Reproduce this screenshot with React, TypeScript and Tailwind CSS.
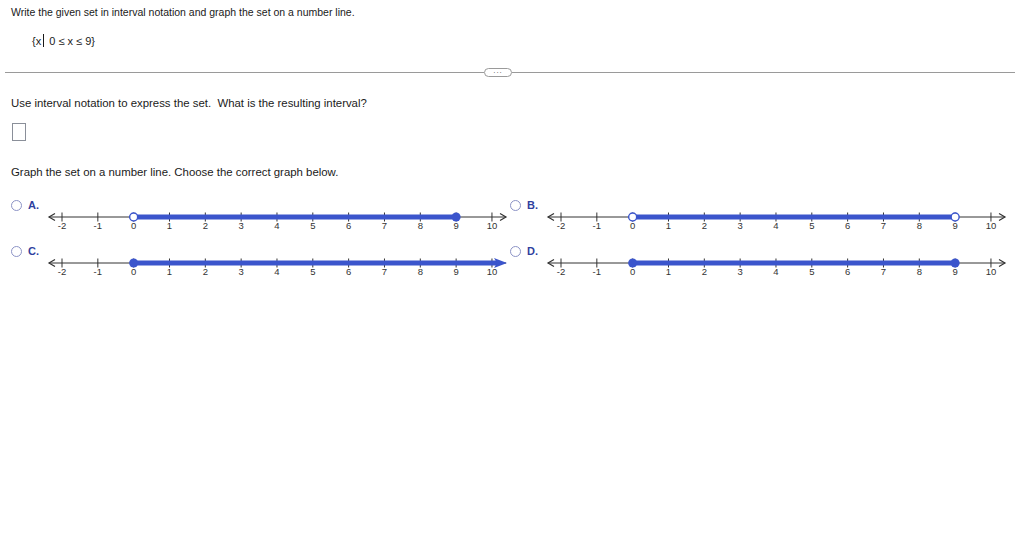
import React from 'react';

type End = 'open' | 'closed' | 'arrow';

const BLUE = '#3b55cc';
const INK = '#333333';

const tickX = (i: number) => 17 + (i + 2) * 35.83;

const NumberLine: React.FC<{ left: 'open' | 'closed'; right: End }> = ({ left, right }) => {
  const y = 10;
  const x0 = tickX(0);
  const x9 = tickX(9);
  const blueEnd = right === 'arrow' ? 452 : x9;
  const ticks = Array.from({ length: 13 }, (_, k) => k - 2);

  return (
    <svg width="470" height="30" viewBox="0 0 470 30" className="block shrink-0">
      {/* base axis */}
      <line x1="4" y1={y} x2="461" y2={y} stroke={INK} strokeWidth="1" />
      <polyline points={`10,${y - 3.5} 4,${y} 10,${y + 3.5}`} fill="none" stroke={INK} strokeWidth="1.2" />
      {right !== 'arrow' && (
        <polyline points={`455,${y - 3.5} 461,${y} 455,${y + 3.5}`} fill="none" stroke={INK} strokeWidth="1.2" />
      )}
      {ticks.map((i) => (
        <g key={i}>
          <line x1={tickX(i)} y1={y - 4.5} x2={tickX(i)} y2={y + 4.5} stroke={INK} strokeWidth="1" />
          <text
            x={tickX(i)}
            y={21.5}
            textAnchor="middle"
            fontSize="9.5"
            fill={INK}
            fontFamily="'Liberation Sans', Arial, sans-serif"
          >
            {i}
          </text>
        </g>
      ))}
      {/* shaded interval */}
      <line x1={x0} y1={y} x2={blueEnd} y2={y} stroke={BLUE} strokeWidth="5" />
      {right === 'arrow' && (
        <polygon points={`449,${y - 5} 462,${y} 449,${y + 5} 452,${y}`} fill={BLUE} />
      )}
      {left === 'open' ? (
        <circle cx={x0} cy={y} r="4" fill="#fff" stroke={BLUE} strokeWidth="1.4" />
      ) : (
        <circle cx={x0} cy={y} r="4.5" fill={BLUE} />
      )}
      {right === 'open' && <circle cx={x9} cy={y} r="4" fill="#fff" stroke={BLUE} strokeWidth="1.4" />}
      {right === 'closed' && <circle cx={x9} cy={y} r="4.5" fill={BLUE} />}
    </svg>
  );
};

const options: { key: string; left: 'open' | 'closed'; right: End }[] = [
  { key: 'A', left: 'open', right: 'closed' },
  { key: 'B', left: 'open', right: 'open' },
  { key: 'C', left: 'closed', right: 'arrow' },
  { key: 'D', left: 'closed', right: 'closed' },
];

const App: React.FC = () => {
  return (
    <div
      className="w-[1024px] h-[550px] bg-white text-[#1a1a1a] text-[11.4px] leading-[14px] overflow-hidden"
      style={{ fontFamily: "'Liberation Sans', Arial, sans-serif" }}
    >
      <div className="pt-[5px] px-[11px]">
        <p className="text-[10.5px]">Write the given set in interval notation and graph the set on a number line.</p>
        <p className="mt-[15px] ml-[21px] text-[11px]">
          {'{'}x<span className="inline-block w-px h-[13px] bg-[#1a1a1a] align-[-2px] mx-[2px]" /> 0 ≤ x ≤ 9{'}'}
        </p>
      </div>

      <div className="mt-[20px] mx-[5px] w-[1010px] h-[9px] flex items-center">
        <div className="h-px bg-[#9a9a9a] w-[479px]" />
        <div className="w-[28px] h-[9px] rounded-full border border-[#9a9a9a] flex items-center justify-center text-[8px] leading-none text-[#555] tracking-[1px]">
          <span className="-mt-[3px]">...</span>
        </div>
        <div className="h-px bg-[#9a9a9a] flex-1" />
      </div>

      <div className="px-[11px]">
        <p className="mt-[19px]">Use interval notation to express the set.&nbsp; What is the resulting interval?</p>
        <div className="mt-[13px] ml-px w-[14px] h-[18px] border border-[#8a8f99]" />
        <p className="mt-[24px]">Graph the set on a number line. Choose the correct graph below.</p>
      </div>

      <div className="mt-[21px] pl-[11px] grid grid-cols-[499px_499px] gap-y-[9px]">
        {options.map((o) => (
          <div key={o.key} className="flex items-start">
            <div className="shrink-0 w-[11px] h-[11px] rounded-full border border-[#8c93c6] bg-white" />
            <span className="shrink-0 ml-[6px] w-[17px] text-[11px] leading-[11px] font-bold text-[#2f3f9e]">{o.key}.</span>
            <div className="shrink-0 mt-[7px]">
              <NumberLine left={o.left} right={o.right} />
            </div>
          </div>
        ))}
      </div>
    </div>
  );
};

export default App;
